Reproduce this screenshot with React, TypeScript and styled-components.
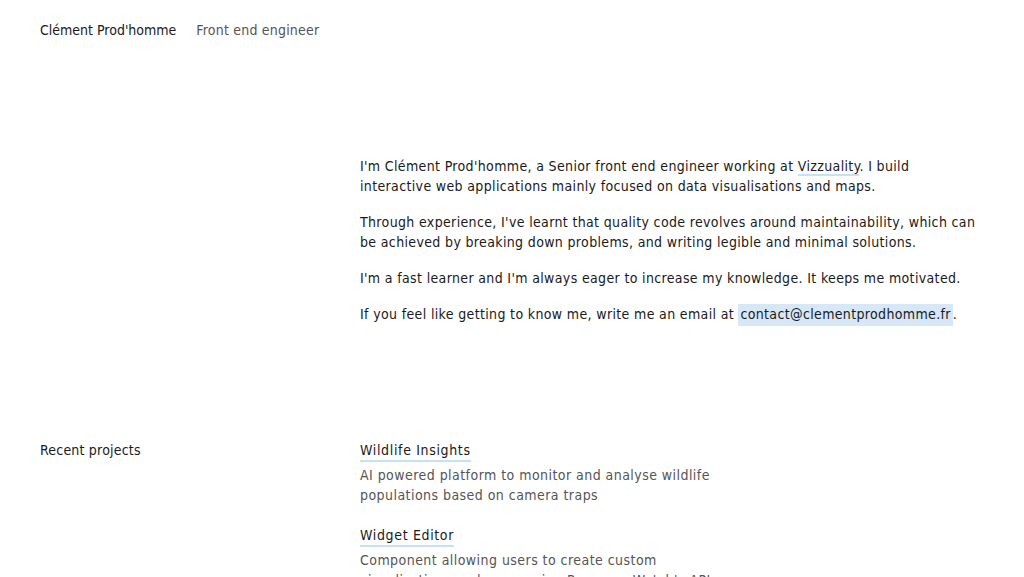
import { createGlobalStyle, styled } from "styled-components";

const GlobalStyle = createGlobalStyle`
  html, body {
    margin: 0;
    padding: 0;
    background: #fff;
  }
  body {
    font-family: "DejaVu Sans Condensed", "DejaVu Sans", sans-serif;
    font-size: 14px;
    line-height: 20px;
    color: #1a1a1a;
  }
`;

const Page = styled.div`
  padding: 20px 40px 0 40px;
`;

const Header = styled.header`
  display: flex;
  gap: 20px;
  height: 20px;
`;

const Name = styled.span`
  color: #1a1a1a;
`;

const Role = styled.span`
  color: #555;
  letter-spacing: 0.2px;
`;

const Section = styled.section<{ $top: number }>`
  display: grid;
  grid-template-columns: 320px 1fr;
  margin-top: ${(p) => p.$top}px;
`;

const Label = styled.h2`
  margin: 0;
  font-size: 14px;
  font-weight: normal;
  letter-spacing: 0.2px;
`;

const Intro = styled.div`
  max-width: 626px;
  letter-spacing: 0.35px;
`;

const Para = styled.p`
  margin: 0 0 16px 0;
  &:last-child {
    margin-bottom: 0;
  }
`;

const Link = styled.a<{ $highlight?: boolean }>`
  color: inherit;
  text-decoration: none;
  border-bottom: 2px solid
    ${(p) => (p.$highlight ? "transparent" : "#c6e0f7")};
  background: ${(p) => (p.$highlight ? "#d6e8f8" : "transparent")};
  padding: ${(p) => (p.$highlight ? "2px 2px" : "0")};
`;

const Title = styled(Link)`
  letter-spacing: 0.65px;
`;

const Projects = styled.ul`
  list-style: none;
  margin: 0;
  padding: 0;
  display: flex;
  flex-direction: column;
  gap: 20px;
`;

const Project = styled.li`
  display: flex;
  flex-direction: column;
  align-items: flex-start;
  gap: 3px;
`;

const Desc = styled.p`
  margin: 0;
  color: #555;
  max-width: 370px;
  letter-spacing: 0.45px;
`;

const projects = [
  {
    title: "Wildlife Insights",
    desc: "AI powered platform to monitor and analyse wildlife populations based on camera traps",
  },
  {
    title: "Widget Editor",
    desc: "Component allowing users to create custom visualisations and maps using Resource Watch's API",
  },
];

export default function App() {
  return (
    <>
      <GlobalStyle />
      <Page>
        <Header>
          <Name>Clément Prod'homme</Name>
          <Role>Front end engineer</Role>
        </Header>
        <Section $top={116}>
          <div />
          <Intro>
            <Para>
              I'm Clément Prod'homme, a Senior front end engineer working at{" "}
              <Link href="#">Vizzuality</Link>. I build interactive web
              applications mainly focused on data visualisations and maps.
            </Para>
            <Para>
              Through experience, I've learnt that quality code revolves around
              maintainability, which can be achieved by breaking down problems,
              and writing legible and minimal solutions.
            </Para>
            <Para>
              I'm a fast learner and I'm always eager to increase my knowledge.
              It keeps me motivated.
            </Para>
            <Para>
              If you feel like getting to know me, write me an email at{" "}
              <Link href="#" $highlight>
                contact@clementprodhomme.fr
              </Link>
              .
            </Para>
          </Intro>
        </Section>
        <Section $top={116}>
          <Label>Recent projects</Label>
          <Projects>
            {projects.map((p) => (
              <Project key={p.title}>
                <Title href="#">{p.title}</Title>
                <Desc>{p.desc}</Desc>
              </Project>
            ))}
          </Projects>
        </Section>
      </Page>
    </>
  );
}
